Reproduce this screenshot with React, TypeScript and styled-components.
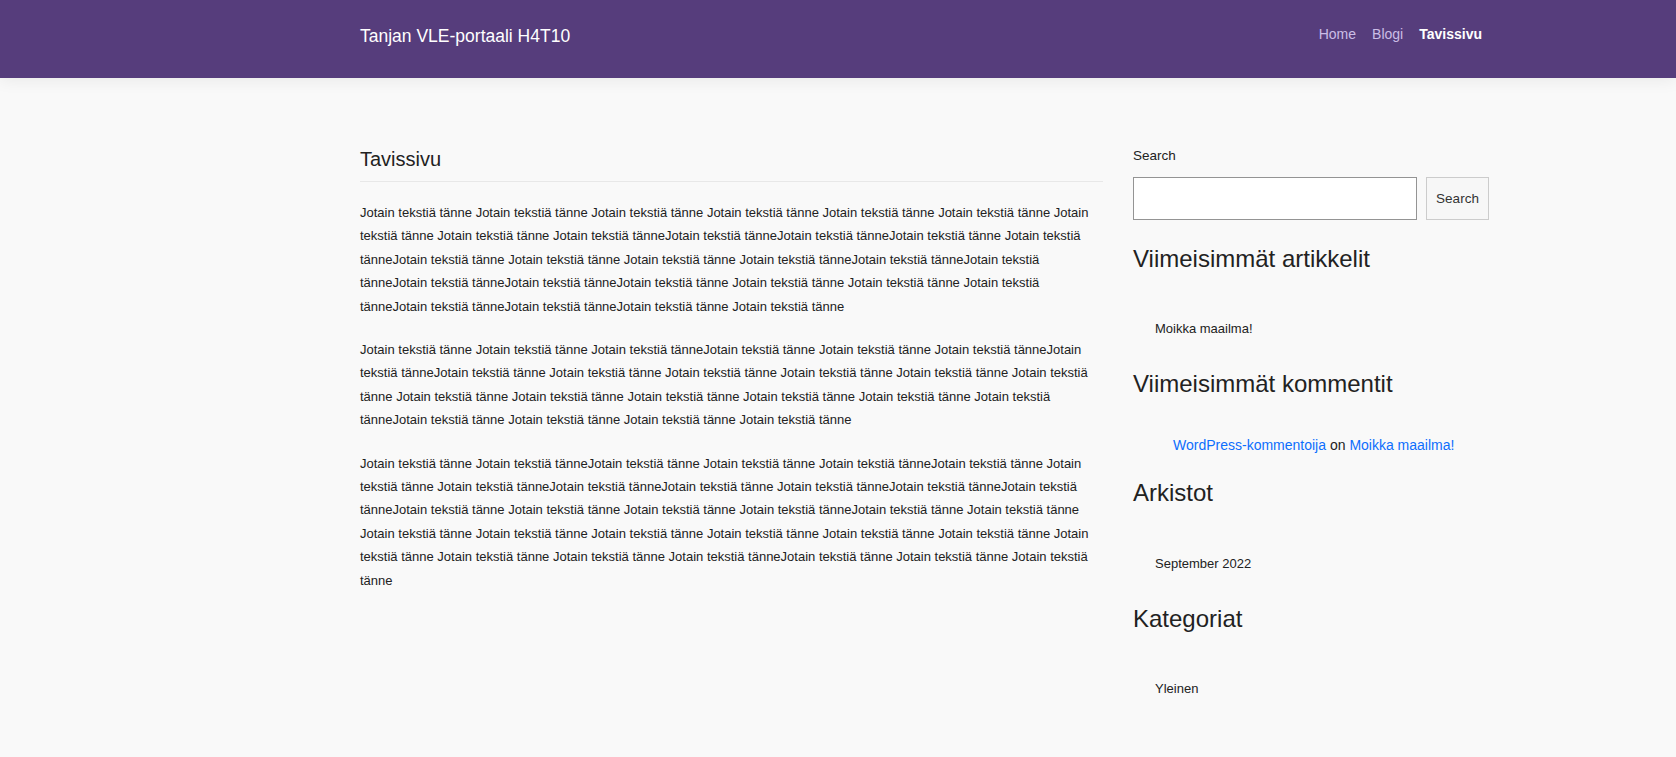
import React from "react";
import styled, { createGlobalStyle } from "styled-components";

const GlobalStyle = createGlobalStyle`
  html, body {
    margin: 0;
    padding: 0;
    background: #f9f9f9;
    font-family: "Liberation Sans", Arial, sans-serif;
    color: #222;
  }
  * { box-sizing: border-box; }
`;

const Page = styled.div`
  min-height: 100vh;
  background: #f9f9f9;
  overflow: hidden;
`;

const Header = styled.header`
  height: 78px;
  background: #563d7c;
  box-shadow: 0 2px 16px rgba(0, 0, 0, 0.07);
  position: relative;
  z-index: 1;
`;

const Container = styled.div`
  width: 1130px;
  margin-left: 360px;
`;

const HeaderInner = styled(Container)`
  display: flex;
  justify-content: space-between;
  align-items: flex-start;
  padding-top: 26px;
`;

const SiteTitle = styled.a`
  font-size: 17.5px;
  line-height: 21px;
  color: #ffffff;
  text-decoration: none;
`;

const Nav = styled.nav`
  display: flex;
`;

const NavLink = styled.a<{ $active?: boolean }>`
  font-size: 14px;
  line-height: 16.8px;
  padding: 0 8px;
  text-decoration: none;
  color: ${(p) => (p.$active ? "#ffffff" : "#cbbde6")};
  font-weight: ${(p) => (p.$active ? 700 : 400)};
`;

const Main = styled(Container)`
  display: grid;
  grid-template-columns: 743px 357px;
  column-gap: 30px;
  padding-top: 69px;
`;

const Article = styled.article``;

const PageTitle = styled.h1`
  margin: 0 0 19px;
  font-size: 20px;
  line-height: 24px;
  font-weight: 400;
  color: #222;
  padding-bottom: 10px;
  border-bottom: 1px solid #e8e8e8;
`;

const Paragraph = styled.p`
  margin: 0 0 20px;
  font-size: 13px;
  line-height: 23.4px;
  color: #222;
`;

const Sidebar = styled.aside`
  display: flex;
  flex-direction: column;
  padding-top: 1px;
`;

const SearchLabel = styled.label`
  font-size: 13.5px;
  line-height: 16px;
  color: #222;
  margin-bottom: 13px;
`;

const SearchRow = styled.div`
  display: flex;
  gap: 9px;
  height: 43px;
`;

const SearchInput = styled.input`
  width: 284px;
  height: 43px;
  border: 1px solid #949494;
  background: #fff;
  font: inherit;
  padding: 0 8px;
`;

const SearchButton = styled.button`
  width: 63px;
  height: 43px;
  border: 1px solid #cccccc;
  background: #f7f7f7;
  color: #333;
  font-family: "Liberation Sans", Arial, sans-serif;
  font-size: 13.5px;
  padding: 0;
`;

const Widget = styled.section<{ $top: number; $gap: number }>`
  display: flex;
  flex-direction: column;
  margin-top: ${(p) => p.$top}px;
  gap: ${(p) => p.$gap}px;
`;

const WidgetTitle = styled.h2`
  margin: 0;
  font-size: 24px;
  line-height: 28.8px;
  font-weight: 400;
  color: #222;
`;

const List = styled.ul<{ $indent: number; $size: number }>`
  list-style: none;
  margin: 0;
  padding: 0 0 0 ${(p) => p.$indent}px;
  font-size: ${(p) => p.$size}px;
  line-height: 1.8;
`;

const ListItem = styled.li``;

const PlainLink = styled.a`
  color: #222;
  text-decoration: none;
`;

const BlueLink = styled.a`
  color: #0d6efd;
  text-decoration: none;
`;

const p1 =
  "Jotain tekstiä tänne Jotain tekstiä tänne Jotain tekstiä tänne Jotain tekstiä tänne Jotain tekstiä tänne Jotain tekstiä tänne Jotain " +
  "tekstiä tänne Jotain tekstiä tänne Jotain tekstiä tänneJotain tekstiä tänneJotain tekstiä tänneJotain tekstiä tänne Jotain tekstiä " +
  "tänneJotain tekstiä tänne Jotain tekstiä tänne Jotain tekstiä tänne Jotain tekstiä tänneJotain tekstiä tänneJotain tekstiä " +
  "tänneJotain tekstiä tänneJotain tekstiä tänneJotain tekstiä tänne Jotain tekstiä tänne Jotain tekstiä tänne Jotain tekstiä " +
  "tänneJotain tekstiä tänneJotain tekstiä tänneJotain tekstiä tänne Jotain tekstiä tänne";

const p2 =
  "Jotain tekstiä tänne Jotain tekstiä tänne Jotain tekstiä tänneJotain tekstiä tänne Jotain tekstiä tänne Jotain tekstiä tänneJotain " +
  "tekstiä tänneJotain tekstiä tänne Jotain tekstiä tänne Jotain tekstiä tänne Jotain tekstiä tänne Jotain tekstiä tänne Jotain tekstiä " +
  "tänne Jotain tekstiä tänne Jotain tekstiä tänne Jotain tekstiä tänne Jotain tekstiä tänne Jotain tekstiä tänne Jotain tekstiä " +
  "tänneJotain tekstiä tänne Jotain tekstiä tänne Jotain tekstiä tänne Jotain tekstiä tänne";

const p3 =
  "Jotain tekstiä tänne Jotain tekstiä tänneJotain tekstiä tänne Jotain tekstiä tänne Jotain tekstiä tänneJotain tekstiä tänne Jotain " +
  "tekstiä tänne Jotain tekstiä tänneJotain tekstiä tänneJotain tekstiä tänne Jotain tekstiä tänneJotain tekstiä tänneJotain tekstiä " +
  "tänneJotain tekstiä tänne Jotain tekstiä tänne Jotain tekstiä tänne Jotain tekstiä tänneJotain tekstiä tänne Jotain tekstiä tänne " +
  "Jotain tekstiä tänne Jotain tekstiä tänne Jotain tekstiä tänne Jotain tekstiä tänne Jotain tekstiä tänne Jotain tekstiä tänne Jotain " +
  "tekstiä tänne Jotain tekstiä tänne Jotain tekstiä tänne Jotain tekstiä tänneJotain tekstiä tänne Jotain tekstiä tänne Jotain tekstiä " +
  "tänne";

export default function App() {
  return (
    <Page>
      <GlobalStyle />
      <Header>
        <HeaderInner>
          <SiteTitle href="#">Tanjan VLE-portaali H4T10</SiteTitle>
          <Nav>
            <NavLink href="#">Home</NavLink>
            <NavLink href="#">Blogi</NavLink>
            <NavLink href="#" $active>
              Tavissivu
            </NavLink>
          </Nav>
        </HeaderInner>
      </Header>
      <Main>
        <Article>
          <PageTitle>Tavissivu</PageTitle>
          <Paragraph>{p1}</Paragraph>
          <Paragraph>{p2}</Paragraph>
          <Paragraph>{p3}</Paragraph>
        </Article>
        <Sidebar>
          <SearchLabel htmlFor="s">Search</SearchLabel>
          <SearchRow>
            <SearchInput id="s" type="text" />
            <SearchButton type="button">Search</SearchButton>
          </SearchRow>
          <Widget $top={25} $gap={43}>
            <WidgetTitle>Viimeisimmät artikkelit</WidgetTitle>
            <List $indent={22} $size={13}>
              <ListItem>
                <PlainLink href="#">Moikka maailma!</PlainLink>
              </ListItem>
            </List>
          </Widget>
          <Widget $top={30} $gap={34}>
            <WidgetTitle>Viimeisimmät kommentit</WidgetTitle>
            <List $indent={40} $size={14}>
              <ListItem>
                <BlueLink href="#">WordPress-kommentoija</BlueLink> on{" "}
                <BlueLink href="#">Moikka maailma!</BlueLink>
              </ListItem>
            </List>
          </Widget>
          <Widget $top={21} $gap={44}>
            <WidgetTitle>Arkistot</WidgetTitle>
            <List $indent={22} $size={13}>
              <ListItem>
                <PlainLink href="#">September 2022</PlainLink>
              </ListItem>
            </List>
          </Widget>
          <Widget $top={30} $gap={43}>
            <WidgetTitle>Kategoriat</WidgetTitle>
            <List $indent={22} $size={13}>
              <ListItem>
                <PlainLink href="#">Yleinen</PlainLink>
              </ListItem>
            </List>
          </Widget>
        </Sidebar>
      </Main>
    </Page>
  );
}
